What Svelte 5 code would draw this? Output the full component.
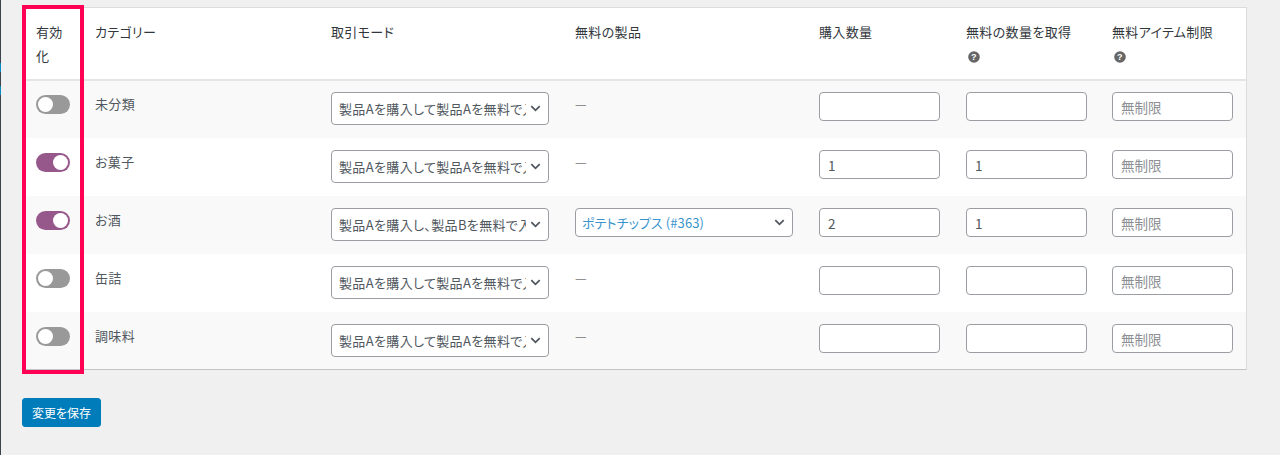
<script>
  const rows = [
    { name: '未分類', on: false, mode: '製品Aを購入して製品Aを無料で入手', product: null, buy: '', get: '' },
    { name: 'お菓子', on: true, mode: '製品Aを購入して製品Aを無料で入手', product: null, buy: '1', get: '1' },
    { name: 'お酒', on: true, mode: '製品Aを購入し、製品Bを無料で入手', product: 'ポテトチップス (#363)', buy: '2', get: '1' },
    { name: '缶詰', on: false, mode: '製品Aを購入して製品Aを無料で入手', product: null, buy: '', get: '' },
    { name: '調味料', on: false, mode: '製品Aを購入して製品Aを無料で入手', product: null, buy: '', get: '' }
  ];
</script>

{#snippet help()}
  <svg class="help" viewBox="0 0 12 12" width="12" height="12">
    <circle cx="6" cy="6" r="5.8" fill="#666" />
    <text x="6" y="9.2" text-anchor="middle" class="help-mark">?</text>
  </svg>
{/snippet}

{#snippet chevron()}
  <svg class="chevron" viewBox="0 0 12 8" width="11" height="7">
    <path d="M1.2 1.2 L6 6 L10.8 1.2" fill="none" stroke="#50575e" stroke-width="2" />
  </svg>
{/snippet}

<div class="page">
  <div class="sidebar-edge">
    <span class="edge-blue one"></span>
    <span class="edge-blue two"></span>
  </div>

  <div class="content">
    <div class="table-wrap">
      <div class="row head">
        <div class="cell c-on">有効<br />化</div>
        <div class="cell c-name">カテゴリー</div>
        <div class="cell c-mode">取引モード</div>
        <div class="cell c-product">無料の製品</div>
        <div class="cell c-buy">購入数量</div>
        <div class="cell c-get">無料の数量を取得<br />{@render help()}</div>
        <div class="cell c-limit">無料アイテム制限<br />{@render help()}</div>
      </div>

      {#each rows as row, i}
        <div class="row" class:alt={i % 2 === 0}>
          <div class="cell c-on">
            <span class="toggle" class:on={row.on}><span class="knob"></span></span>
          </div>
          <div class="cell c-name">{row.name}</div>
          <div class="cell c-mode">
            <div class="select mode"><span class="select-text">{row.mode}</span>{@render chevron()}</div>
          </div>
          <div class="cell c-product">
            {#if row.product}
              <div class="select product"><span class="select-text">{row.product}</span>{@render chevron()}</div>
            {:else}
              <span class="dash">—</span>
            {/if}
          </div>
          <div class="cell c-buy"><input class="num" value={row.buy} /></div>
          <div class="cell c-get"><input class="num" value={row.get} /></div>
          <div class="cell c-limit"><input class="num" placeholder="無制限" /></div>
        </div>
      {/each}

      <div class="highlight"></div>
    </div>

    <button class="save">変更を保存</button>
  </div>
</div>

<style>
  :global(body) {
    margin: 0;
    background: #f0f0f1;
  }

  .page {
    display: flex;
    height: 455px;
    overflow: hidden;
    font-family: "Noto Sans CJK JP", "Liberation Sans", sans-serif;
    font-size: 13px;
    font-feature-settings: "palt";
    letter-spacing: 0.35px;
    color: #50575e;
  }

  .sidebar-edge {
    position: relative;
    flex: none;
    width: 1px;
    background: #3c434a;
  }

  .edge-blue {
    position: absolute;
    left: 0;
    width: 1px;
    height: 9px;
    background: #0a8ac4;
  }

  .edge-blue.one {
    top: 63px;
  }

  .edge-blue.two {
    top: 86px;
  }

  .content {
    flex: 1;
    min-width: 0;
    padding: 7px 33px 0 21px;
  }

  .table-wrap {
    position: relative;
    background: #fff;
    border: 1px solid #dcdcde;
    border-bottom-color: #c3c4c7;
  }

  .row {
    display: flex;
    height: 58px;
    box-sizing: border-box;
  }

  .row.alt {
    background: #f9f9f9;
  }

  .row.head {
    height: 73px;
    border-bottom: 2px solid #e5e5e5;
    color: #32373c;
    font-weight: 400;
  }

  .row.head + .row {
    height: 57px;
  }

  .row.head + .row .cell {
    padding-top: 11px;
  }

  .row:nth-last-child(2) {
    height: 57px;
  }

  .cell {
    box-sizing: border-box;
    padding-top: 12px;
    line-height: 24px;
  }

  .c-on {
    width: 72px;
    padding-left: 13px;
  }

  .c-name {
    width: 236px;
  }

  .c-mode {
    width: 244px;
  }

  .c-product {
    width: 244px;
  }

  .c-buy {
    width: 147px;
  }

  .c-get {
    width: 146px;
  }

  .c-limit {
    width: 134px;
  }

  .toggle {
    display: block;
    position: relative;
    width: 34px;
    height: 19px;
    margin-top: 3px;
    border-radius: 10px;
    background: #999;
  }

  .toggle.on {
    background: #96588a;
  }

  .knob {
    position: absolute;
    top: 2px;
    left: 2px;
    width: 15px;
    height: 15px;
    border-radius: 50%;
    background: #fff;
  }

  .toggle.on .knob {
    left: 17px;
  }

  .select {
    display: flex;
    align-items: center;
    justify-content: space-between;
    box-sizing: border-box;
    width: 218px;
    height: 33px;
    padding: 0 7px 0 7px;
    background: #fff;
    border: 1px solid #9a9ea3;
    border-radius: 4px;
  }

  .select.product {
    height: 29px;
    padding-left: 6px;
    letter-spacing: 0.1px;
  }

  .select-text {
    width: 187px;
    overflow: hidden;
    white-space: nowrap;
  }

  .product .select-text {
    color: #3a94cc;
  }

  .dash {
    color: #777;
  }

  .num {
    display: block;
    box-sizing: border-box;
    width: 121px;
    height: 29px;
    padding: 0 8px;
    background: #fff;
    border: 1px solid #9a9ea3;
    border-radius: 4px;
    color: #50575e;
    font: inherit;
    font-size: 13.5px;
  }

  .num::placeholder {
    color: #8c8f94;
    opacity: 1;
  }

  .help {
    display: inline-block;
    margin-left: 2px;
    vertical-align: -2px;
  }

  .help-mark {
    fill: #fff;
    font-size: 9px;
    font-weight: 700;
    font-family: "Liberation Sans", sans-serif;
  }

  .highlight {
    position: absolute;
    left: -1px;
    top: -3px;
    width: 62px;
    height: 369px;
    box-sizing: border-box;
    border: 4px solid #ff0055;
    pointer-events: none;
  }

  .save {
    display: block;
    margin-top: 28px;
    width: 79px;
    height: 29px;
    padding: 0;
    background: #007cba;
    border: 1px solid #007cba;
    border-radius: 3px;
    color: #fff;
    font: inherit;
    font-size: 12px;
  }
</style>
